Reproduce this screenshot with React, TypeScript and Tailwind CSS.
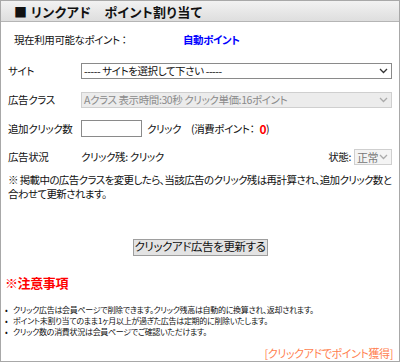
import React from "react";

const Chevron = ({ color = "#333" }: { color?: string }) => (
  <svg width="9" height="6" viewBox="0 0 9 6">
    <path d="M1 1 L4.5 4.5 L8 1" fill="none" stroke={color} strokeWidth="1.3" />
  </svg>
);

export default function App() {
  const font = "[font-family:'Noto_Sans_CJK_JP','Liberation_Sans',sans-serif] [font-feature-settings:'palt']";
  return (
    <div className={`w-[400px] h-[362px] bg-white border border-[#a8a8a8] flex flex-col text-[10.5px] tracking-[-0.4px] text-[#111] ${font}`}>
      <div className="h-[21px] shrink-0 bg-gradient-to-b from-[#f2f2f2] to-[#dedede] border-b border-[#b5b5b5] flex items-center pl-[13px] text-[13px] tracking-[0.4px] font-bold leading-none">
        <span>■ リンクアド　ポイント割り当て</span>
      </div>

      <div className="h-[44px] flex items-center pl-[13px] pt-[2px]">
        <span className="w-[169px]">現在利用可能なポイント ：</span>
        <span className="text-[#0000ff] font-bold">自動ポイント</span>
      </div>

      <div className="flex flex-col pl-[7px] pr-[7px]">
        <div className="h-[29px] flex items-center">
          <span className="w-[73px] shrink-0 whitespace-nowrap">サイト</span>
          <div className="flex-1 h-[16px] border border-[#8a8a8a] bg-white flex items-center justify-between pl-[2px] pr-[3px] leading-none">
            <span>----- サイトを選択して下さい -----</span>
            <Chevron />
          </div>
        </div>
        <div className="h-[29px] flex items-center">
          <span className="w-[73px] shrink-0 whitespace-nowrap">広告クラス</span>
          <div className="flex-1 h-[16px] border border-[#cfcfcf] bg-[#ececec] text-[#8a8a8a] flex items-center justify-between pl-[2px] pr-[3px] leading-none">
            <span>Aクラス 表示時間:30秒 クリック単価:16ポイント</span>
            <Chevron color="#aaa" />
          </div>
        </div>
        <div className="h-[28px] flex items-center whitespace-nowrap">
          <span className="w-[73px] shrink-0">追加クリック数</span>
          <div className="w-[61px] h-[17px] shrink-0 border border-[#8a8a8a] bg-white" />
          <span className="ml-[5px] w-[44px]">クリック</span>
          <span>(消費ポイント：</span>
          <span className="ml-[5px] text-[#ff0000] font-bold text-[12px]">0</span>
          <span>)</span>
        </div>
        <div className="h-[29px] flex items-center whitespace-nowrap">
          <span className="w-[73px] shrink-0">広告状況</span>
          <span className="flex-1">クリック残: クリック</span>
          <span className="mr-[3px]">状態:</span>
          <div className="w-[38px] h-[16px] shrink-0 border border-[#cfcfcf] bg-[#f4f4f4] text-[#777] flex items-center justify-between pl-[2px] pr-[3px] leading-none text-[11px]">
            <span>正常</span>
            <Chevron color="#aaa" />
          </div>
        </div>
        <div className="pt-[1px] leading-[14px] whitespace-nowrap tracking-[-0.6px]">
          ※ 掲載中の広告クラスを変更したら、当該広告のクリック残は再計算され、追加クリック数と
          <br />
          合わせて更新されます。
        </div>
      </div>

      <div className="flex justify-center mt-[38px]">
        <div className="w-[135px] h-[17px] bg-[#e3e3e3] border border-[#9e9e9e] flex items-center justify-center text-[11.5px] leading-none whitespace-nowrap">
          クリックアド広告を更新する
        </div>
      </div>

      <div className="mt-[19px] pl-[4px] text-[#ff0000] font-bold text-[13px] leading-[16px]">※注意事項</div>

      <ul className="mt-[13px] pl-[4px] text-[8px] tracking-[-0.3px]">
        <li className="flex h-[11px] items-center leading-[11px] whitespace-nowrap"><span className="w-[8px]">•</span><span>クリック広告は会員ページで削除できます。クリック残高は自動的に換算され、返却されます。</span></li>
        <li className="flex h-[11px] items-center leading-[11px] whitespace-nowrap"><span className="w-[8px]">•</span><span>ポイント未割り当てのまま1ヶ月以上が過ぎた広告は定期的に削除いたします。</span></li>
        <li className="flex h-[11px] items-center leading-[11px] whitespace-nowrap"><span className="w-[8px]">•</span><span>クリック数の消費状況は会員ページでご確認いただけます。</span></li>
      </ul>

      <div className="mt-[8px] pr-[6px] text-right text-[#ff7f50] text-[11px]">[クリックアドでポイント獲得]</div>
    </div>
  );
}
